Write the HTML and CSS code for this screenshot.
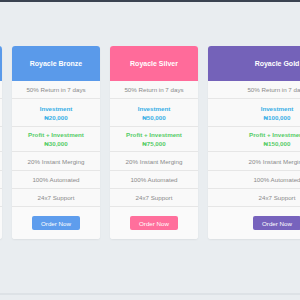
FILE: index.html
```html
<!DOCTYPE html>
<html>
<head>
<meta charset="utf-8">
<link rel="stylesheet" href="styles.css">
</head>
<body>
<div class="topbar"></div>
<section class="pricing">
  <div class="cards">
    <div class="card">
      <div class="head blue">Royacle Starter</div>
      <div class="row">50% Return in 7 days</div>
      <div class="row two inv">Investment<br>₦10,000</div>
      <div class="row three prof">Profit + Investment<br>₦15,000</div>
      <div class="row r4">20% Instant Merging</div>
      <div class="row">100% Automated</div>
      <div class="row">24x7 Support</div>
      <div class="foot"><span class="btn b-blue">Order Now</span></div>
    </div>
    <div class="card">
      <div class="head blue">Royacle Bronze</div>
      <div class="row">50% Return in 7 days</div>
      <div class="row two inv">Investment<br>₦20,000</div>
      <div class="row three prof">Profit + Investment<br>₦30,000</div>
      <div class="row r4">20% Instant Merging</div>
      <div class="row">100% Automated</div>
      <div class="row">24x7 Support</div>
      <div class="foot"><span class="btn b-blue">Order Now</span></div>
    </div>
    <div class="card">
      <div class="head pink">Royacle Silver</div>
      <div class="row">50% Return in 7 days</div>
      <div class="row two inv">Investment<br>₦50,000</div>
      <div class="row three prof">Profit + Investment<br>₦75,000</div>
      <div class="row r4">20% Instant Merging</div>
      <div class="row">100% Automated</div>
      <div class="row">24x7 Support</div>
      <div class="foot"><span class="btn b-pink">Order Now</span></div>
    </div>
    <div class="card wide">
      <div class="head purple">Royacle Gold</div>
      <div class="row">50% Return in 7 days</div>
      <div class="row two inv">Investment<br>₦100,000</div>
      <div class="row three prof">Profit + Investment<br>₦150,000</div>
      <div class="row r4">20% Instant Merging</div>
      <div class="row">100% Automated</div>
      <div class="row">24x7 Support</div>
      <div class="foot"><span class="btn b-purple">Order Now</span></div>
    </div>
  </div>
</section>
<div class="bottom"></div>
</body>
</html>
```
FILE: styles.css
```css
html, body {
  margin: 0;
  padding: 0;
  width: 300px;
  height: 300px;
  overflow: hidden;
  background: #e9edf0;
  font-family: "Liberation Sans", Arial, "DejaVu Sans", sans-serif;
}
.topbar {
  height: 2px;
  background: #3b4351;
}
.pricing {
  height: 291px;
  box-sizing: border-box;
  padding-top: 44px;
}
.cards {
  display: flex;
  gap: 10px;
  margin-left: -86px;
  width: 500px;
  align-items: flex-start;
}
.card {
  flex: 0 0 88px;
  background: #fafafa;
  border-radius: 3px;
  overflow: hidden;
  box-shadow: 0 1px 2px rgba(0,0,0,0.06);
}
.card.wide {
  flex-basis: 138px;
}
.head {
  height: 35px;
  display: flex;
  align-items: center;
  justify-content: center;
  color: #fff;
  font-weight: bold;
  font-size: 7px;
}
.blue { background: #5a9aea; }
.pink { background: #ff6b9a; }
.purple { background: #7462b9; }
.row {
  height: 18px;
  display: flex;
  align-items: center;
  justify-content: center;
  text-align: center;
  font-size: 6.2px;
  color: #8a8a8a;
  border-bottom: 1px solid #e6e6e6;
  background: #f9f9f9;
  box-sizing: border-box;
}
.row.r4 { height: 19px; }
.row.two {
  height: 28px;
  line-height: 9px;
  font-weight: bold;
}
.row.three {
  height: 25px;
  line-height: 9px;
  font-weight: bold;
}
.inv { color: #37aee6; }
.prof { color: #55cc66; }
.foot {
  height: 32px;
  display: flex;
  align-items: center;
  justify-content: center;
  background: #fafafa;
}
.btn {
  width: 48px;
  height: 14px;
  border-radius: 2px;
  color: #fff;
  font-size: 6.2px;
  display: flex;
  align-items: center;
  justify-content: center;
}
.b-blue { background: #5e9ded; }
.b-pink { background: #ff6f9c; }
.b-purple { background: #7763bd; }
.bottom {
  height: 2px;
  background: #dde2e6;
}
```
